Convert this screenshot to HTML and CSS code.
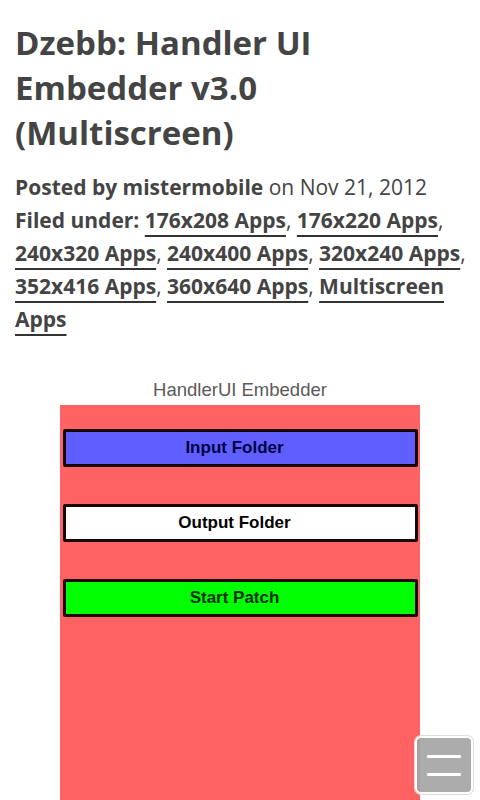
FILE: index.html
```html
<!DOCTYPE html>
<html>
<head>
	<title>Dzebb: Handler UI Embedder v3.0 (Multiscreen)</title>
	<link rel="stylesheet" href="styles.css">
</head>
<body>
	<div class="post">
		<h1 class="post-title">Dzebb: Handler UI Embedder v3.0 (Multiscreen)</h1>
		<div class="post-meta">
			<div><b>Posted by mistermobile</b> on Nov 21, 2012</div>
			<div><b>Filed under:</b> <a href="#">176x208 Apps</a>, <a href="#">176x220 Apps</a>, <a href="#">240x320 Apps</a>, <a href="#">240x400 Apps</a>, <a href="#">320x240 Apps</a>, <a href="#">352x416 Apps</a>, <a href="#">360x640 Apps</a>, <a href="#">Multiscreen Apps</a></div>
		</div>

		<!-- screenshot of the app -->
		<div class="shot">
			<div class="shot-caption">HandlerUI Embedder</div>
			<div class="shot-screen">
				<div class="app-btn btn-input">Input Folder</div>
				<div class="app-btn btn-output">Output Folder</div>
				<div class="app-btn btn-start">Start Patch</div>
			</div>
		</div>
	</div>

	<button class="menu-toggle" aria-label="Menu">
		<span></span>
		<span></span>
	</button>
</body>
</html>
```

FILE: styles.css
```css
body {
	margin: 0;
	font-family: "Open Sans", sans-serif;
	color: #444;
	background: #fff;
	overflow: hidden;
	height: 800px;
}
.post {
	padding: 0 8px 0 15px;
}
.post-title {
	margin: 20px 0 16px;
	font-size: 33px;
	line-height: 45px;
	font-weight: 700;
	color: #444;
}
.post-meta {
	font-size: 21px;
	line-height: 33px;
}
.post-meta b {
	font-weight: 700;
}
.post-meta a {
	color: #444;
	font-weight: 700;
	text-decoration: underline;
	text-decoration-color: #333;
	text-decoration-thickness: 2px;
	text-underline-offset: 7px;
	text-decoration-skip-ink: none;
}
.shot {
	width: 360px;
	margin: 39px 0 0 45px;
}
.shot-caption {
	text-align: center;
	font-family: "Liberation Sans", Arial, sans-serif;
	font-size: 18.5px;
	line-height: 30px;
	color: #5a5a5a;
}
.shot-screen {
	background: #ff6262;
	height: 420px;
	padding: 24px 2px 0 3px;
	display: flex;
	flex-direction: column;
	gap: 37px;
}
.app-btn {
	height: 32px;
	padding-right: 12px;
	border: 3px solid #1a0505;
	border-radius: 2px;
	display: flex;
	align-items: center;
	justify-content: center;
	font-family: "Liberation Sans", Arial, sans-serif;
	font-weight: 700;
	font-size: 17px;
	color: #000;
}
.btn-input {
	background: #5f5fff;
	color: #000040;
}
.btn-output {
	background: #fff;
}
.btn-start {
	background: #00ff00;
	color: #003000;
}
.menu-toggle {
	position: fixed;
	left: 415px;
	top: 736px;
	width: 58px;
	height: 58px;
	background: rgba(165, 165, 165, 0.92);
	border: 2px solid #fff;
	border-radius: 6px;
	box-shadow: 0 0 0 1px #ddd;
	display: flex;
	flex-direction: column;
	justify-content: center;
	align-items: center;
	gap: 15px;
	padding: 0;
}
.menu-toggle span {
	display: block;
	width: 34px;
	height: 3px;
	background: #fff;
	border-radius: 1px;
}
```
